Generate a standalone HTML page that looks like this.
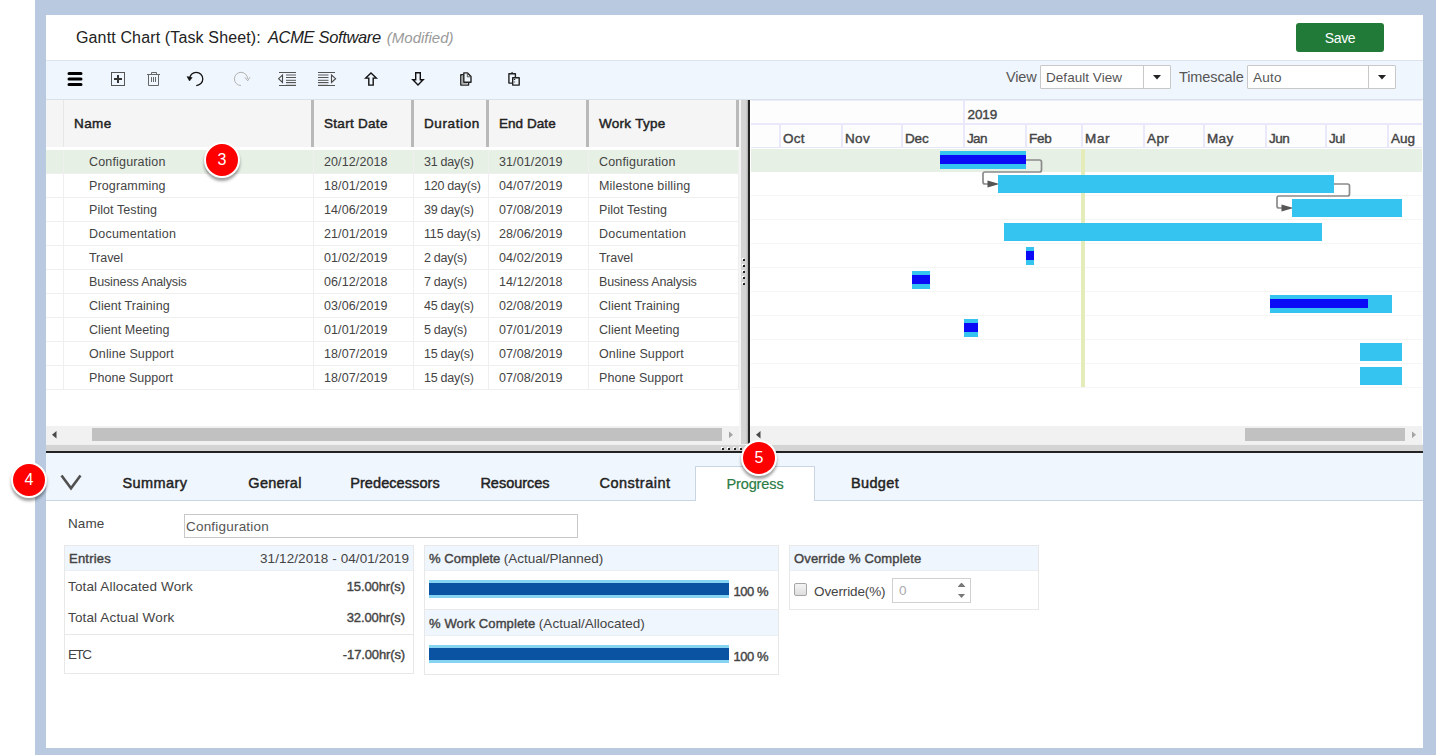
<!DOCTYPE html>
<html lang="en"><head><meta charset="utf-8"><title>Gantt Chart (Task Sheet)</title>
<style>
*{box-sizing:border-box;margin:0;padding:0}
html,body{width:1436px;height:755px;overflow:hidden;background:#fff}
body{position:relative;font-family:"Liberation Sans",sans-serif;color:#444;font-size:13px}
body>div,body>i,body>svg{position:absolute;display:block}
i{font-style:normal}
.frame{left:35px;top:0;width:1401px;height:755px;background:#b8c9e0}
.app{left:46px;top:15px;width:1377px;height:733px;background:#fff}
.title{left:76px;top:25px;height:24px;line-height:24px;white-space:nowrap;color:#222;font-size:16px}
.title .t1{margin-right:7px}
.title .t2{font-style:italic;color:#222;font-size:16.500px;margin-right:6px}
.title .t3{font-style:italic;font-size:15px;color:#999}
.save{left:1296px;top:23px;width:88px;height:29px;background:#217a37;border-radius:3px;color:#fff;font-size:14px;text-align:center;line-height:30px}
.toolbar{left:46px;top:60px;width:1377px;height:40px;background:#f0f6fd;border-top:1px solid #dbe4ee;border-bottom:1px solid #d9e2ea}
.lbl{top:66px;height:22px;line-height:22px;font-size:14.500px;color:#555;white-space:nowrap}
.dd{top:65px;height:24px;background:#fff;border:1px solid #c8c8c8;border-radius:1px}
.dd .ddt{position:absolute;left:5px;top:0;line-height:23px;font-size:13.500px;color:#555;white-space:nowrap}
.dd .dda{position:absolute;right:0;top:0;width:27px;height:22px;border-left:1px solid #c8c8c8}
.dd .dda:after{content:"";position:absolute;left:9px;top:9px;width:8px;height:4.500px;background:#222;clip-path:polygon(0 0,100% 0,50% 100%)}
.ghead{left:46px;top:100px;width:693px;height:47px;background:#f5f5f5}
.gh{top:114px;height:20px;line-height:20px;font-size:13.500px;color:#222;white-space:nowrap;-webkit-text-stroke:.45px #222}
.cdiv{top:100px;width:3px;height:47px;background:#b9b9b9}
.row{left:46px;width:693px;height:24px;border-bottom:1px solid #efefef;line-height:25px;font-size:12.500px;color:#444;white-space:nowrap}
.row.sel{background:#e6f0e5}
.row span,.row i{position:absolute;top:0;height:23px}
.row .c0{left:0;width:18px;border-right:1px solid #efefef}
.row .c1{left:43px}
.row .c2{left:278px}
.row .c3{left:378px}
.row .c4{left:453px}
.row .c5{left:553px}
.row:before{content:"";position:absolute;left:267px;top:0;width:1px;height:23px;background:#efefef;box-shadow:100px 0 0 #efefef,175px 0 0 #efefef,275px 0 0 #efefef,425px 0 0 #efefef}
.hsb{top:426px;height:18px;background:#f1f1f1}
.hsb .th{position:absolute;top:2px;height:13px;background:#c1c1c1}
.hsb .al{position:absolute;left:6px;top:5px;width:4.500px;height:7.500px;background:#484848;clip-path:polygon(100% 0,0 50%,100% 100%)}
.hsb .ar{position:absolute;right:6px;top:5px;width:4.500px;height:7.500px;background:#484848;clip-path:polygon(0 0,100% 50%,0 100%)}
.hsb .ar.dis{background:#a3a3a3}
.vsplit{left:739px;top:100px;width:9px;height:344px;background:linear-gradient(to right,#f4f4f4 0,#f4f4f4 2px,#d4d4d4 2px,#d4d4d4 7px,#a8a8a8 9px)}
.vline{left:748px;top:100px;width:2px;height:345px;background:#222}
.dot{width:2px;height:2px;background:#222;box-shadow:-1px -1px 0 #fff}
.gth{left:751px;top:100px;width:671px;height:48px;background:#fdfdfe;border-top:1px solid #ececfb;border-bottom:1px solid #e6e6fb}
.gth:after{content:"";position:absolute;left:0;top:22px;width:671px;height:2px;background:#e9e9fb}
.mv{width:2px;background:#e9e9fb}
.yr{top:105px;line-height:20px;font-size:13.500px;color:#444;-webkit-text-stroke:.4px #444;margin-left:-.500px}
.mo{top:129px;line-height:20px;font-size:13.500px;color:#444;-webkit-text-stroke:.4px #444}
.grow{left:751px;width:671px;height:23px}
.grow.sel{background:#e6f0e5}
.gl{left:751px;width:671px;height:1px;background:#f5f5f5}
.today{left:1081px;top:149px;width:4px;height:238px;background:#e4ecb9}
.dep{overflow:visible}
.bar{height:18px;background:#35c4f0}
.bar i{position:absolute;left:0;top:4px;height:9px;background:#0a0af7}
.hsplit{left:46px;top:444px;width:1377px;height:8px;background:#d4d4d4;border-top:1px solid #efefef}
.hline{left:46px;top:451px;width:1377px;height:2px;background:#222}
.tabs{left:46px;top:453px;width:1377px;height:48px;background:#f0f6fd;border-bottom:1px solid #c9d5e2}
.chev{left:60px;top:474px}
.tab{top:466px;width:120px;height:35px;text-align:center;line-height:35px;font-size:14.500px;color:#222;white-space:nowrap;-webkit-text-stroke:.45px #222}
.tab.act{background:#fff;border:1px solid #c9d5e2;border-bottom:0;-webkit-text-stroke:.2px #2a7c43;font-size:14.500px;color:#2a7c43;line-height:34px}
.flbl{line-height:20px;font-size:13.500px;color:#444}
.inp{left:184px;top:514px;width:394px;height:24px;border:1px solid #c8c8c8;background:#fff;line-height:24px;font-size:13.500px;color:#555;padding-left:1px}
.panel{border:1px solid #e8e8e8;background:#fff;font-size:13.500px;color:#444}
.panel b{color:#444;font-weight:normal;font-size:13px;-webkit-text-stroke:.4px #444}
.ph{position:absolute;left:0;top:0;right:0;height:25px;background:#f0f6fd;border-bottom:1px solid #ebeff3;line-height:26px;padding-left:4px;white-space:nowrap}
.ph2{border-top:1px solid #e8e8e8;height:27px;line-height:28px}
.phr{position:absolute;right:4px;top:0}
.pr{position:absolute;left:3px;right:8px;height:20px;line-height:20px;white-space:nowrap}
.pr b{position:absolute;right:0;top:0}
.psep{position:absolute;left:0;right:0;height:1px;background:#e8e8e8}
.pb{position:absolute;left:4px;width:300px;height:18px;background:#87d3f2}
.pb i{position:absolute;left:0;right:0;top:3px;height:12px;background:#0a53a3}
.pct{position:absolute;left:308.500px;top:37px;line-height:18px;white-space:nowrap}
.pct2{top:102px}
.cb{position:absolute;left:4px;top:37px;width:13px;height:13px;border:1px solid #a5a5a5;border-radius:2px;background:linear-gradient(#f4f4f4,#dedede)}
.ovl{position:absolute;left:24px;top:36px;line-height:20px;white-space:nowrap}
.num{position:absolute;left:102px;top:32px;width:79px;height:25px;border:1px solid #d0d0d0;line-height:23px;color:#aaa;padding-left:6px}
.num .su{position:absolute;right:4.500px;top:3.500px;width:8px;height:4.500px;background:#777;clip-path:polygon(50% 0,100% 100%,0 100%)}
.num .sd{position:absolute;right:4.500px;top:14.500px;width:8px;height:4.500px;background:#777;clip-path:polygon(0 0,100% 0,50% 100%)}
.badge{width:36px;height:36px;border-radius:50%;background:#fe0000;border:2px solid #fff;box-shadow:0 3px 3px rgba(0,0,0,.38);color:#fff;font-size:16px;text-align:center;line-height:32px}
.ghead:before{content:"";position:absolute;left:17px;top:0;width:1px;height:47px;background:#e6e6e6}
.sp{margin-left:3.400px}

</style></head>
<body>
<div class="frame"></div>
<div class="app"></div>
<div class="title"><span class="t1" style="letter-spacing:0.14px">Gantt Chart (Task Sheet):</span><span class="t2" style="letter-spacing:-0.34px">ACME Software</span><span class="t3" style="letter-spacing:-0.01px">(Modified)</span></div>
<div class="save"><span style="letter-spacing:-0.4px">Save</span></div>
<div class="toolbar"></div>
<svg class="ico" width="480" height="20" viewBox="60 68 480 20" style="left:60px;top:68px">
<g stroke="#000" stroke-width="3" stroke-linecap="round"><path d="M69 73.500H81M69 79H81M69 84.500H81"/></g>
<g fill="none" stroke="#555" stroke-width="1"><rect x="111.500" y="72.500" width="13" height="13"/><path d="M114 79H122M118 75V83" stroke="#333" stroke-width="2"/></g>
<g fill="none" stroke="#666" stroke-width="1"><path d="M147 74.500H160M151.500 74V72.500H156.500V74M148.500 75V85.500H158.500V75M151.500 77V82M153.500 77V82M155.500 77V82"/></g>
<g fill="none" stroke="#111" stroke-width="1.250"><path d="M189.600 78.900A6.600 6.600 0 1 1 196.200 85.500"/><path d="M187 76.600L192.200 77.500L189.500 81Z" fill="#111" stroke-width=".5"/></g>
<g fill="none" stroke="#b2b2b2" stroke-width="1"><path d="M247.600 78.900A6.600 6.600 0 1 0 241 85.500"/><path d="M244.900 77.400L247.700 80.800L250 77.100"/></g>
<g fill="none" stroke="#555" stroke-width="1"><path d="M279 72.500H296M279 85.500H296M286 77.500H296M286 80.300H296M286 82.500H296"/><path d="M286 75H296" stroke-width="1.300" opacity=".75"/><path d="M286 84.100H296" opacity=".35"/><path d="M282.500 75V82.500L278.600 78.700Z" stroke="#4a4a4a" stroke-width="1.100"/></g>
<g fill="none" stroke="#555" stroke-width="1"><path d="M318 72.500H335M318 85.500H335M318 77.500H328.500M318 80.300H328.500M318 82.500H328.500"/><path d="M318 75H328.500" stroke-width="1.300" opacity=".75"/><path d="M318 84.100H328.500" opacity=".35"/><path d="M331.500 75V82.500L335.600 78.700Z" stroke="#4a4a4a" stroke-width="1.100"/></g>
<g fill="none" stroke="#111" stroke-width="1.400" stroke-linejoin="miter"><path d="M371 72.900L376.300 78.100H373.200V85.100H368.800V78.100H365.700Z"/><path d="M418 85L423.200 79.700H420.300V72.800H415.700V79.700H412.800Z"/></g>
<g fill="none" stroke="#222" stroke-width="1.400" stroke-linejoin="round"><path d="M463.800 72.900H467.500L471 76.600V82.300H463.800Z"/><path d="M467.300 73V76.800H471" stroke-width="1" stroke="#555"/><path d="M463.500 74.800H460.800V85.100H468.600V82.600"/><path d="M462.300 75.500V83.800H467" stroke="#999" stroke-width="1"/></g>
<g fill="none" stroke="#222" stroke-width="1.400" stroke-linejoin="round"><path d="M512 83.100H508.900V73.700H515.400V77"/><path d="M510.800 73.600L512.100 72.400L513.400 73.600" stroke-width="1"/><rect x="512.700" y="77.800" width="6.500" height="7.300"/><path d="M514.500 78.900V80" stroke-width="1.300"/><path d="M514.500 81.400V82.500" stroke-width="1.300" stroke="#666"/></g>
</svg>
<div class="lbl" style="left:1006px"><span style="letter-spacing:-0.14px">View</span></div><div class="dd" style="left:1040px;width:131px"><span class="ddt" style="letter-spacing:0.04px">Default View</span><i class="dda"></i></div>
<div class="lbl" style="left:1179px"><span style="letter-spacing:-0.1px">Timescale</span></div><div class="dd" style="left:1247px;width:149px"><span class="ddt" style="letter-spacing:0.22px">Auto</span><i class="dda"></i></div>
<div class="ghead"></div>
<div class="gh" style="left:74px"><span style="letter-spacing:0.4px">Name</span></div><div class="gh" style="left:324px"><span style="letter-spacing:0.29px">Start Date</span></div><div class="gh" style="left:424px"><span style="letter-spacing:0.61px">Duration</span></div><div class="gh" style="left:499px"><span style="letter-spacing:0.05px">End Date</span></div><div class="gh" style="left:599px"><span style="letter-spacing:0.28px">Work Type</span></div>
<i class="cdiv" style="left:311px"></i><i class="cdiv" style="left:411px"></i><i class="cdiv" style="left:486px"></i><i class="cdiv" style="left:586px"></i><i class="cdiv" style="left:736px"></i>
<div class="row sel" style="top:150px"><i class="c0"></i><span class="c1" style="letter-spacing:0.17px">Configuration</span><span class="c2" style="letter-spacing:0.11px">20/12/2018</span><span class="c3" style="letter-spacing:-0.27px">31 day(s)</span><span class="c4" style="letter-spacing:0.11px">31/01/2019</span><span class="c5" style="letter-spacing:0.17px">Configuration</span></div>
<div class="row" style="top:174px"><i class="c0"></i><span class="c1" style="letter-spacing:0.14px">Programming</span><span class="c2" style="letter-spacing:0.11px">18/01/2019</span><span class="c3" style="letter-spacing:-0.25px">120 day(s)</span><span class="c4" style="letter-spacing:0.11px">04/07/2019</span><span class="c5" style="letter-spacing:0.14px">Milestone billing</span></div>
<div class="row" style="top:198px"><i class="c0"></i><span class="c1" style="letter-spacing:0.07px">Pilot Testing</span><span class="c2" style="letter-spacing:0.11px">14/06/2019</span><span class="c3" style="letter-spacing:-0.27px">39 day(s)</span><span class="c4" style="letter-spacing:0.11px">07/08/2019</span><span class="c5" style="letter-spacing:0.07px">Pilot Testing</span></div>
<div class="row" style="top:222px"><i class="c0"></i><span class="c1" style="letter-spacing:0.23px">Documentation</span><span class="c2" style="letter-spacing:0.11px">21/01/2019</span><span class="c3" style="letter-spacing:-0.16px">115 day(s)</span><span class="c4" style="letter-spacing:0.11px">28/06/2019</span><span class="c5" style="letter-spacing:0.23px">Documentation</span></div>
<div class="row" style="top:246px"><i class="c0"></i><span class="c1" style="letter-spacing:-0.05px">Travel</span><span class="c2" style="letter-spacing:0.11px">01/02/2019</span><span class="c3" style="letter-spacing:-0.29px">2 day(s)</span><span class="c4" style="letter-spacing:0.11px">04/02/2019</span><span class="c5" style="letter-spacing:-0.05px">Travel</span></div>
<div class="row" style="top:270px"><i class="c0"></i><span class="c1" style="letter-spacing:-0.14px">Business Analysis</span><span class="c2" style="letter-spacing:0.11px">06/12/2018</span><span class="c3" style="letter-spacing:-0.29px">7 day(s)</span><span class="c4" style="letter-spacing:0.11px">14/12/2018</span><span class="c5" style="letter-spacing:-0.14px">Business Analysis</span></div>
<div class="row" style="top:294px"><i class="c0"></i><span class="c1" style="letter-spacing:0.05px">Client Training</span><span class="c2" style="letter-spacing:0.11px">03/06/2019</span><span class="c3" style="letter-spacing:-0.27px">45 day(s)</span><span class="c4" style="letter-spacing:0.11px">02/08/2019</span><span class="c5" style="letter-spacing:0.05px">Client Training</span></div>
<div class="row" style="top:318px"><i class="c0"></i><span class="c1" style="letter-spacing:0.05px">Client Meeting</span><span class="c2" style="letter-spacing:0.11px">01/01/2019</span><span class="c3" style="letter-spacing:-0.29px">5 day(s)</span><span class="c4" style="letter-spacing:0.11px">07/01/2019</span><span class="c5" style="letter-spacing:0.05px">Client Meeting</span></div>
<div class="row" style="top:342px"><i class="c0"></i><span class="c1" style="letter-spacing:0.11px">Online Support</span><span class="c2" style="letter-spacing:0.11px">18/07/2019</span><span class="c3" style="letter-spacing:-0.27px">15 day(s)</span><span class="c4" style="letter-spacing:0.11px">07/08/2019</span><span class="c5" style="letter-spacing:0.11px">Online Support</span></div>
<div class="row" style="top:366px"><i class="c0"></i><span class="c1" style="letter-spacing:0.05px">Phone Support</span><span class="c2" style="letter-spacing:0.11px">18/07/2019</span><span class="c3" style="letter-spacing:-0.27px">15 day(s)</span><span class="c4" style="letter-spacing:0.11px">07/08/2019</span><span class="c5" style="letter-spacing:0.05px">Phone Support</span></div>
<div class="hsb" style="left:46px;width:693px"><i class="al"></i><i class="th" style="left:46px;width:630px"></i><i class="ar dis"></i></div>
<div class="vsplit"></div><div class="vline"></div>
<i class="dot" style="left:743px;top:259px"></i><i class="dot" style="left:743px;top:265px"></i><i class="dot" style="left:743px;top:271px"></i><i class="dot" style="left:743px;top:277px"></i><i class="dot" style="left:743px;top:283px"></i>
<div class="gth"></div>
<div class="yr" style="left:968px"><span style="letter-spacing:-0.08px">2019</span></div><i class="mv" style="left:963px;top:100px;height:24px"></i>
<i class="mv" style="left:779px;top:125px;height:22px"></i><div class="mo" style="left:783px"><span style="letter-spacing:0.28px">Oct</span></div><i class="mv" style="left:841px;top:125px;height:22px"></i><div class="mo" style="left:845px"><span style="letter-spacing:0.35px">Nov</span></div><i class="mv" style="left:901px;top:125px;height:22px"></i><div class="mo" style="left:905px"><span style="letter-spacing:-0.18px">Dec</span></div><i class="mv" style="left:963px;top:125px;height:22px"></i><div class="mo" style="left:967px"><span style="letter-spacing:-0.69px">Jan</span></div><i class="mv" style="left:1025px;top:125px;height:22px"></i><div class="mo" style="left:1029px"><span style="letter-spacing:-0.25px">Feb</span></div><i class="mv" style="left:1081px;top:125px;height:22px"></i><div class="mo" style="left:1085px"><span style="letter-spacing:0.63px">Mar</span></div><i class="mv" style="left:1143px;top:125px;height:22px"></i><div class="mo" style="left:1147px"><span style="letter-spacing:0.43px">Apr</span></div><i class="mv" style="left:1203px;top:125px;height:22px"></i><div class="mo" style="left:1207px"><span style="letter-spacing:0.32px">May</span></div><i class="mv" style="left:1265px;top:125px;height:22px"></i><div class="mo" style="left:1269px"><span style="letter-spacing:-0.45px">Jun</span></div><i class="mv" style="left:1325px;top:125px;height:22px"></i><div class="mo" style="left:1329px"><span style="letter-spacing:-0.49px">Jul</span></div><i class="mv" style="left:1387px;top:125px;height:22px"></i><div class="mo" style="left:1391px"><span style="letter-spacing:0.01px">Aug</span></div>
<div class="grow sel" style="top:149px"></div>
<i class="gl" style="top:195px"></i><i class="gl" style="top:219px"></i><i class="gl" style="top:243px"></i><i class="gl" style="top:267px"></i><i class="gl" style="top:291px"></i><i class="gl" style="top:315px"></i><i class="gl" style="top:339px"></i><i class="gl" style="top:363px"></i><i class="gl" style="top:387px"></i>
<i class="today"></i>
<svg class="dep" width="673" height="300" viewBox="750 148 673 300" style="left:750px;top:148px">
<g fill="none" stroke="#8a8a8a" stroke-width="1.700" stroke-linejoin="round">
<path d="M1026 160H1039.500Q1041.500 160 1041.500 162V170Q1041.500 172 1039.500 172H985Q983 172 983 174V182Q983 184 985 184H990"/>
<path d="M1334 184H1347.500Q1349.500 184 1349.500 186V194Q1349.500 196 1347.500 196H1279Q1277 196 1277 198V206Q1277 208 1279 208H1284"/>
</g>
<path d="M987.500 180.600L999.500 184L987.500 187.400Z" fill="#555"/>
<path d="M1281.500 204.600L1293.500 208L1281.500 211.400Z" fill="#555"/>
</svg>
<div class="bar" style="left:940px;top:151px;width:86px"><i style="width:86px"></i></div><div class="bar" style="left:998px;top:175px;width:336px"></div><div class="bar" style="left:1292px;top:199px;width:110px"></div><div class="bar" style="left:1004px;top:223px;width:318px"></div><div class="bar" style="left:1026px;top:247px;width:8px"><i style="width:8px"></i></div><div class="bar" style="left:912px;top:271px;width:18px"><i style="width:18px"></i></div><div class="bar" style="left:1270px;top:295px;width:122px"><i style="width:98px"></i></div><div class="bar" style="left:964px;top:319px;width:14px"><i style="width:14px"></i></div><div class="bar" style="left:1360px;top:343px;width:42px"></div><div class="bar" style="left:1360px;top:367px;width:42px"></div>
<div class="hsb" style="left:750px;width:672px"><i class="al"></i><i class="th" style="left:495px;width:160px"></i><i class="ar dis"></i></div>
<div class="hsplit"></div><div class="hline"></div>
<i class="dot" style="left:722px;top:448px"></i><i class="dot" style="left:728px;top:448px"></i><i class="dot" style="left:734px;top:448px"></i><i class="dot" style="left:740px;top:448px"></i>
<div class="tabs"></div>
<svg class="chev" width="24" height="18" viewBox="0 0 24 18"><path d="M1.500 1.500L11 14.300L20.500 1.500" fill="none" stroke="#505050" stroke-width="2.600"/></svg>
<div class="tab" style="left:95px"><span style="letter-spacing:0.42px">Summary</span></div><div class="tab" style="left:215px"><span style="letter-spacing:0.24px">General</span></div><div class="tab" style="left:335px"><span style="letter-spacing:0.08px">Predecessors</span></div><div class="tab" style="left:455px"><span style="letter-spacing:-0.02px">Resources</span></div><div class="tab" style="left:575px"><span style="letter-spacing:0.51px">Constraint</span></div><div class="tab act" style="left:695px"><span style="letter-spacing:-0.12px">Progress</span></div><div class="tab" style="left:815px"><span style="letter-spacing:0.37px">Budget</span></div>
<div class="flbl" style="left:68px;top:514px"><span style="letter-spacing:0.09px">Name</span></div><div class="inp"><span style="letter-spacing:0.2px">Configuration</span></div>
<div class="panel" style="left:64px;top:545px;width:350px;height:129px"><div class="ph"><b style="letter-spacing:0.22px">Entries</b><span class="phr" style="letter-spacing:0.08px">31/12/2018 - 04/01/2019</span></div><div class="pr" style="top:31px"><span style="letter-spacing:0.14px">Total Allocated Work</span><b style="letter-spacing:-0.09px">15.00hr(s)</b></div><div class="pr" style="top:62px"><span style="letter-spacing:0.14px">Total Actual Work</span><b style="letter-spacing:-0.09px">32.00hr(s)</b></div><i class="psep" style="top:88px"></i><div class="pr" style="top:99px"><span style="letter-spacing:-1.47px">ETC</span><b style="letter-spacing:-0.13px">-17.00hr(s)</b></div></div>
<div class="panel" style="left:424px;top:545px;width:355px;height:130px"><div class="ph"><b style="letter-spacing:0.06px">% Complete</b><span class="sp" style="letter-spacing:-0.02px">(Actual/Planned)</span></div><div class="pb" style="top:34px"><i></i></div><b class="pct" style="letter-spacing:-0.47px">100 %</b><div class="ph ph2" style="top:63px"><b style="letter-spacing:0.13px">% Work Complete</b><span class="sp" style="letter-spacing:0.01px">(Actual/Allocated)</span></div><div class="pb" style="top:99px"><i></i></div><b class="pct pct2" style="letter-spacing:-0.47px">100 %</b></div>
<div class="panel" style="left:789px;top:545px;width:250px;height:65px"><div class="ph"><b style="letter-spacing:0.16px">Override % Complete</b></div><i class="cb"></i><span class="ovl" style="letter-spacing:-0.12px">Override(%)</span><div class="num"><span style="letter-spacing:-0.08px">0</span><i class="su"></i><i class="sd"></i></div></div>
<div class="badge" style="left:204px;top:142px"><span>3</span></div><div class="badge" style="left:11px;top:462px"><span>4</span></div><div class="badge" style="left:741px;top:440px"><span>5</span></div>
</body></html>
